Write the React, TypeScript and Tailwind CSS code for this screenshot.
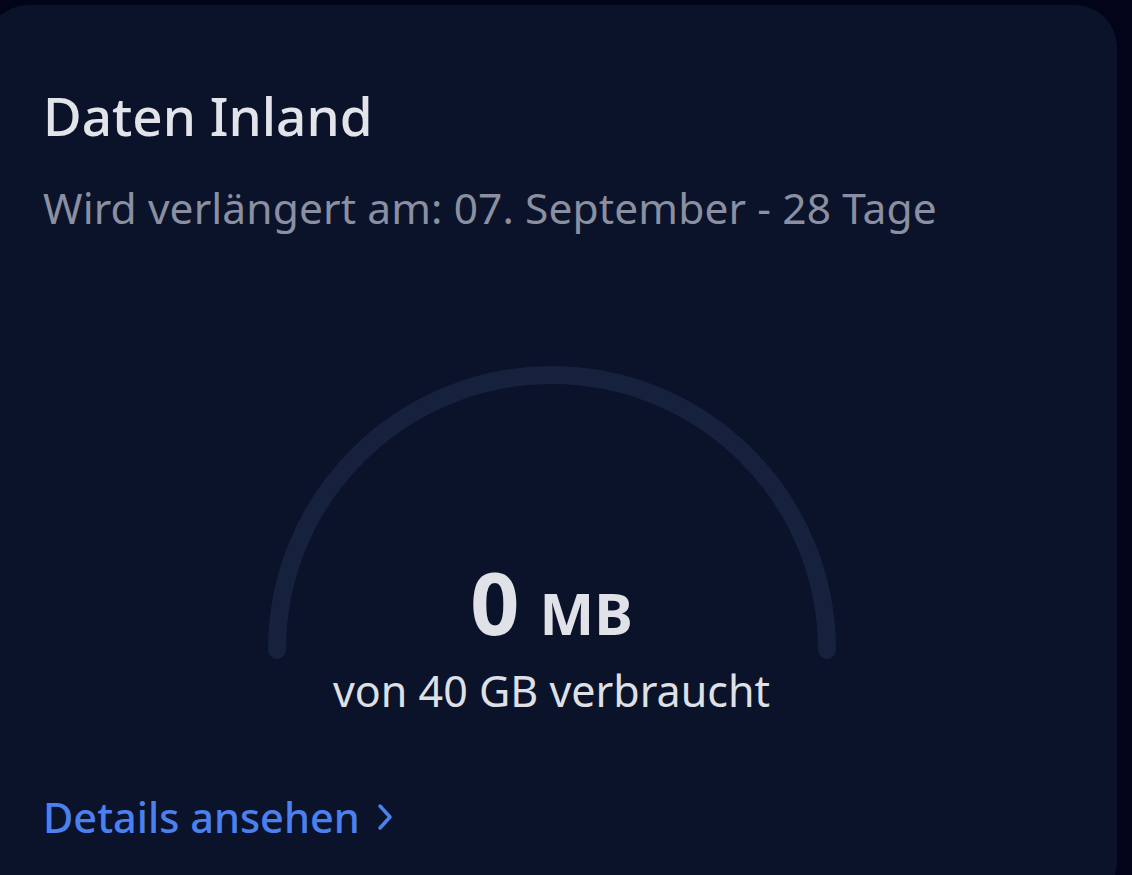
import React from "react";

function Gauge() {
  const r = 275;
  const cx = 290;
  const cy = 290;
  return (
    <div className="relative mx-auto w-[580px] h-[360px]">
      <svg width="580" height="300" viewBox="0 0 580 300" className="block">
        <path
          d={`M ${cx - r} ${cy} A ${r} ${r} 0 0 1 ${cx + r} ${cy}`}
          fill="none"
          stroke="#15213d"
          strokeWidth="18"
          strokeLinecap="round"
        />
      </svg>
      <div className="absolute left-0 right-0 top-[199px] flex flex-col items-center">
        <div className="flex items-baseline gap-[18px] text-[#e1e2e8] font-bold leading-none">
          <span className="text-[86px] tracking-[2px]">0</span>
          <span className="text-[58px]">MB</span>
        </div>
        <div className="mt-[24px] text-[43px] text-[#dfe0e6] leading-none">von 40 GB verbraucht</div>
      </div>
    </div>
  );
}

export default function App() {
  return (
    <div
      className="w-[1132px] h-[875px] overflow-hidden bg-[#03031a] pt-[5px]"
      style={{ fontFamily: '"Noto Sans", "Open Sans", sans-serif' }}
    >
      <div className="ml-[-14px] w-[1131px] h-[900px] rounded-[42px] bg-[#0a1329] pl-[57px] pt-[79px]">
        <h1 className="text-[53px] font-medium text-[#e3e4ea] leading-[1.2]">Daten Inland</h1>
        <p className="mt-[34px] text-[42.5px] tracking-[0.1px] text-[#8a8fa1] leading-[1.2]">
          Wird verlängert am: 07. September - 28 Tage
        </p>
        <div className="ml-[-57px] mt-[127px]">
          <Gauge />
        </div>
        <a className="mt-[77px] flex items-center gap-[17px] text-[41.5px] font-medium text-[#4a80ef] leading-none">
          Details ansehen
          <svg width="16" height="28" viewBox="0 0 16 28" fill="none">
            <path d="M3 3 L13 14 L3 25" stroke="#4a80ef" strokeWidth="3.5" strokeLinecap="round" strokeLinejoin="round" />
          </svg>
        </a>
      </div>
    </div>
  );
}
